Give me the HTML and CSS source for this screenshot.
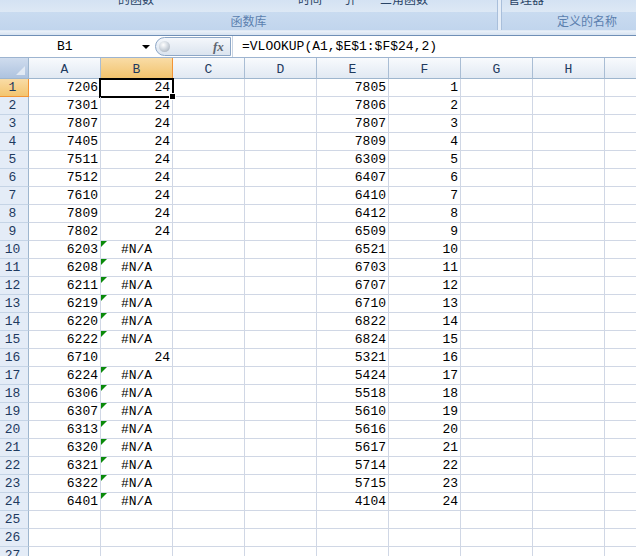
FILE: index.html
```html
<!DOCTYPE html>
<html lang="zh-CN">
<head>
<meta charset="utf-8">
<title>VLOOKUP</title>
<link rel="stylesheet" href="styles.css">
</head>
<body>
<div class="app">
  <div class="ribbon">
    <div class="group g1">
      <div class="btnrow">
        <span class="cut l1">的函数</span>
        <span class="cut l2">时间</span>
        <span class="cut l3">引</span>
        <span class="cut l4">三角函数</span>
      </div>
      <div class="glabel">函数库</div>
    </div>
    <div class="gsep"></div>
    <div class="group g2">
      <div class="btnrow">
        <span class="cut l5">管理器</span>
      </div>
      <div class="glabel">定义的名称</div>
    </div>
  </div>
  <div class="ribbon-foot"></div>
  <div class="fbar">
    <div class="namebox"><span class="ref">B1</span><span class="arrow"></span></div>
    <div class="fxpill"><span class="knob"></span><span class="fx">fx</span></div>
    <div class="formula">=VLOOKUP(A1,$E$1:$F$24,2)</div>
  </div>
  <div class="sheet">
    <div class="row hdr"><div class="corner"><span class="tri"></span></div><div class="ch">A</div><div class="ch on">B</div><div class="ch">C</div><div class="ch">D</div><div class="ch">E</div><div class="ch">F</div><div class="ch">G</div><div class="ch">H</div><div class="ch"></div></div>
    <div class="row"><div class="rh on">1</div><div class="c">7206</div><div class="c sel">24</div><div class="c"></div><div class="c"></div><div class="c">7805</div><div class="c">1</div><div class="c"></div><div class="c"></div><div class="c"></div></div>
    <div class="row"><div class="rh">2</div><div class="c">7301</div><div class="c">24</div><div class="c"></div><div class="c"></div><div class="c">7806</div><div class="c">2</div><div class="c"></div><div class="c"></div><div class="c"></div></div>
    <div class="row"><div class="rh">3</div><div class="c">7807</div><div class="c">24</div><div class="c"></div><div class="c"></div><div class="c">7807</div><div class="c">3</div><div class="c"></div><div class="c"></div><div class="c"></div></div>
    <div class="row"><div class="rh">4</div><div class="c">7405</div><div class="c">24</div><div class="c"></div><div class="c"></div><div class="c">7809</div><div class="c">4</div><div class="c"></div><div class="c"></div><div class="c"></div></div>
    <div class="row"><div class="rh">5</div><div class="c">7511</div><div class="c">24</div><div class="c"></div><div class="c"></div><div class="c">6309</div><div class="c">5</div><div class="c"></div><div class="c"></div><div class="c"></div></div>
    <div class="row"><div class="rh">6</div><div class="c">7512</div><div class="c">24</div><div class="c"></div><div class="c"></div><div class="c">6407</div><div class="c">6</div><div class="c"></div><div class="c"></div><div class="c"></div></div>
    <div class="row"><div class="rh">7</div><div class="c">7610</div><div class="c">24</div><div class="c"></div><div class="c"></div><div class="c">6410</div><div class="c">7</div><div class="c"></div><div class="c"></div><div class="c"></div></div>
    <div class="row"><div class="rh">8</div><div class="c">7809</div><div class="c">24</div><div class="c"></div><div class="c"></div><div class="c">6412</div><div class="c">8</div><div class="c"></div><div class="c"></div><div class="c"></div></div>
    <div class="row"><div class="rh">9</div><div class="c">7802</div><div class="c">24</div><div class="c"></div><div class="c"></div><div class="c">6509</div><div class="c">9</div><div class="c"></div><div class="c"></div><div class="c"></div></div>
    <div class="row"><div class="rh">10</div><div class="c">6203</div><div class="c err">#N/A</div><div class="c"></div><div class="c"></div><div class="c">6521</div><div class="c">10</div><div class="c"></div><div class="c"></div><div class="c"></div></div>
    <div class="row"><div class="rh">11</div><div class="c">6208</div><div class="c err">#N/A</div><div class="c"></div><div class="c"></div><div class="c">6703</div><div class="c">11</div><div class="c"></div><div class="c"></div><div class="c"></div></div>
    <div class="row"><div class="rh">12</div><div class="c">6211</div><div class="c err">#N/A</div><div class="c"></div><div class="c"></div><div class="c">6707</div><div class="c">12</div><div class="c"></div><div class="c"></div><div class="c"></div></div>
    <div class="row"><div class="rh">13</div><div class="c">6219</div><div class="c err">#N/A</div><div class="c"></div><div class="c"></div><div class="c">6710</div><div class="c">13</div><div class="c"></div><div class="c"></div><div class="c"></div></div>
    <div class="row"><div class="rh">14</div><div class="c">6220</div><div class="c err">#N/A</div><div class="c"></div><div class="c"></div><div class="c">6822</div><div class="c">14</div><div class="c"></div><div class="c"></div><div class="c"></div></div>
    <div class="row"><div class="rh">15</div><div class="c">6222</div><div class="c err">#N/A</div><div class="c"></div><div class="c"></div><div class="c">6824</div><div class="c">15</div><div class="c"></div><div class="c"></div><div class="c"></div></div>
    <div class="row"><div class="rh">16</div><div class="c">6710</div><div class="c">24</div><div class="c"></div><div class="c"></div><div class="c">5321</div><div class="c">16</div><div class="c"></div><div class="c"></div><div class="c"></div></div>
    <div class="row"><div class="rh">17</div><div class="c">6224</div><div class="c err">#N/A</div><div class="c"></div><div class="c"></div><div class="c">5424</div><div class="c">17</div><div class="c"></div><div class="c"></div><div class="c"></div></div>
    <div class="row"><div class="rh">18</div><div class="c">6306</div><div class="c err">#N/A</div><div class="c"></div><div class="c"></div><div class="c">5518</div><div class="c">18</div><div class="c"></div><div class="c"></div><div class="c"></div></div>
    <div class="row"><div class="rh">19</div><div class="c">6307</div><div class="c err">#N/A</div><div class="c"></div><div class="c"></div><div class="c">5610</div><div class="c">19</div><div class="c"></div><div class="c"></div><div class="c"></div></div>
    <div class="row"><div class="rh">20</div><div class="c">6313</div><div class="c err">#N/A</div><div class="c"></div><div class="c"></div><div class="c">5616</div><div class="c">20</div><div class="c"></div><div class="c"></div><div class="c"></div></div>
    <div class="row"><div class="rh">21</div><div class="c">6320</div><div class="c err">#N/A</div><div class="c"></div><div class="c"></div><div class="c">5617</div><div class="c">21</div><div class="c"></div><div class="c"></div><div class="c"></div></div>
    <div class="row"><div class="rh">22</div><div class="c">6321</div><div class="c err">#N/A</div><div class="c"></div><div class="c"></div><div class="c">5714</div><div class="c">22</div><div class="c"></div><div class="c"></div><div class="c"></div></div>
    <div class="row"><div class="rh">23</div><div class="c">6322</div><div class="c err">#N/A</div><div class="c"></div><div class="c"></div><div class="c">5715</div><div class="c">23</div><div class="c"></div><div class="c"></div><div class="c"></div></div>
    <div class="row"><div class="rh">24</div><div class="c">6401</div><div class="c err">#N/A</div><div class="c"></div><div class="c"></div><div class="c">4104</div><div class="c">24</div><div class="c"></div><div class="c"></div><div class="c"></div></div>
    <div class="row"><div class="rh">25</div><div class="c"></div><div class="c"></div><div class="c"></div><div class="c"></div><div class="c"></div><div class="c"></div><div class="c"></div><div class="c"></div><div class="c"></div></div>
    <div class="row"><div class="rh">26</div><div class="c"></div><div class="c"></div><div class="c"></div><div class="c"></div><div class="c"></div><div class="c"></div><div class="c"></div><div class="c"></div><div class="c"></div></div>
    <div class="row"><div class="rh">27</div><div class="c"></div><div class="c"></div><div class="c"></div><div class="c"></div><div class="c"></div><div class="c"></div><div class="c"></div><div class="c"></div><div class="c"></div></div>
  </div>
</div>
</body>
</html>
```
FILE: styles.css
```css
html, body {
  margin: 0;
  padding: 0;
  background: #ffffff;
}

.app {
  width: 636px;
  height: 556px;
  overflow: hidden;
  font-family: "Liberation Mono", "DejaVu Sans Mono", monospace;
  font-size: 13px;
  color: #000;
}

/* ---------- ribbon ---------- */
.ribbon {
  display: flex;
  height: 30px;
  overflow: hidden;
  font-family: "Noto Sans CJK SC", "Noto Sans", sans-serif;
}

.group {
  display: flex;
  flex-direction: column;
}

.g1 { width: 497px; }
.g2 { flex: 1; }

.btnrow {
  height: 12px;
  overflow: hidden;
  display: flex;
  background: linear-gradient(#d4e2f3, #dde8f5);
}

.cut {
  font-size: 12px;
  line-height: 14px;
  margin-top: -8px;
  color: #2a4466;
  white-space: nowrap;
}

.l1 { margin-left: 118px; }
.l2 { margin-left: 144px; }
.l3 { margin-left: 21px; }
.l4 { margin-left: 25px; }
.l5 { margin-left: 6px; }

.glabel {
  height: 18px;
  line-height: 18px;
  font-size: 12px;
  text-align: center;
  color: #5b7fae;
  background: linear-gradient(#c9dbf0, #c1d5ed);
}

.g2 .glabel {
  text-align: left;
  padding-left: 55px;
}

.gsep {
  width: 3px;
  border-left: 1px solid #a9bfdb;
  border-right: 1px solid #a9bfdb;
  background: #e6eef8;
}

.ribbon-foot {
  height: 5px;
  background: linear-gradient(#eaf1f9, #d7e3f1);
  border-top: 1px solid #dfe9f5;
  box-sizing: border-box;
}

/* ---------- formula bar ---------- */
.fbar {
  display: flex;
  align-items: center;
  height: 23px;
  box-sizing: border-box;
  border-top: 1px solid #6f8fb6;
  border-bottom: 1px solid #9db4d0;
  background: #ffffff;
}

.namebox {
  width: 152px;
  height: 21px;
  display: flex;
  align-items: center;
  box-sizing: border-box;
}

.ref {
  margin-left: 57px;
  width: 82px;
  color: #000;
}

.arrow {
  width: 0;
  height: 0;
  margin-left: 3px;
  border-left: 4px solid transparent;
  border-right: 4px solid transparent;
  border-top: 4px solid #000;
}

.fxpill {
  width: 76px;
  height: 19px;
  margin-left: 3px;
  box-sizing: border-box;
  border: 1px solid #8ca6c6;
  border-radius: 10px 0 0 10px;
  background: linear-gradient(#f4f7fb, #dbe4ef);
  display: flex;
  align-items: center;
}

.knob {
  width: 11px;
  height: 11px;
  margin-left: 3px;
  border-radius: 50%;
  background: radial-gradient(circle at 40% 35%, #ffffff 0, #d7dde4 40%, #9aa5b2 100%);
}

.fx {
  margin-left: 43px;
  font-family: "Liberation Serif", serif;
  font-style: italic;
  font-weight: bold;
  font-size: 13px;
  color: #5e6670;
}

.formula {
  margin-left: 1px;
  border-left: 1px solid #c7d3e2;
  height: 21px;
  line-height: 21px;
  padding-left: 9px;
  white-space: nowrap;
}

/* ---------- sheet ---------- */
.sheet {
  display: flex;
  flex-direction: column;
}

.row {
  display: flex;
  height: 18px;
  flex: none;
}

.row.hdr { height: 21px; }

.corner {
  width: 29px;
  flex: none;
  box-sizing: border-box;
  border-right: 1px solid #9eb6ce;
  border-bottom: 1px solid #9eb6ce;
  background: linear-gradient(#cfdcee, #aec3df);
  position: relative;
}

.tri {
  position: absolute;
  right: 3px;
  bottom: 3px;
  width: 0;
  height: 0;
  border-left: 9px solid transparent;
  border-bottom: 9px solid #e2eaf4;
}

.ch {
  width: 72px;
  flex: none;
  box-sizing: border-box;
  border-right: 1px solid #a9bdd4;
  border-bottom: 1px solid #9eb6ce;
  background: linear-gradient(#f8fafd, #e1e9f3);
  text-align: center;
  line-height: 20px;
  padding-top: 2px;
  color: #1e3a5f;
}

.ch.on {
  background: linear-gradient(#f9dca6, #f2c36d);
  border-right-color: #f29436;
  border-bottom-color: #f29436;
}

.rh {
  width: 29px;
  flex: none;
  box-sizing: border-box;
  border-right: 1px solid #9eb6ce;
  border-bottom: 1px solid #c5d4e6;
  background: #e4ecf7;
  text-align: center;
  padding-right: 3px;
  line-height: 18px;
  color: #1e3a5f;
}

.rh.on {
  background: linear-gradient(#f9dca6, #f3c570);
  border-right-color: #f29436;
  border-bottom-color: #f29436;
}

.c {
  width: 72px;
  flex: none;
  box-sizing: border-box;
  border-right: 1px solid #d0d7e5;
  border-bottom: 1px solid #d0d7e5;
  text-align: right;
  padding-right: 2px;
  line-height: 17px;
  white-space: nowrap;
  position: relative;
}

.c.err {
  text-align: center;
  padding-right: 0;
}

.c.err::before {
  content: "";
  position: absolute;
  left: 0;
  top: 0;
  width: 0;
  height: 0;
  border-top: 6px solid #0a8a0a;
  border-right: 6px solid transparent;
}

.c.sel::after {
  content: "";
  position: absolute;
  left: -2px;
  top: -1px;
  right: -2px;
  bottom: -2px;
  border: 2px solid #000;
}

.c.sel::before {
  content: "";
  position: absolute;
  right: -4px;
  bottom: -4px;
  width: 5px;
  height: 5px;
  background: #000;
  border: 1px solid #fff;
  z-index: 1;
}
```
